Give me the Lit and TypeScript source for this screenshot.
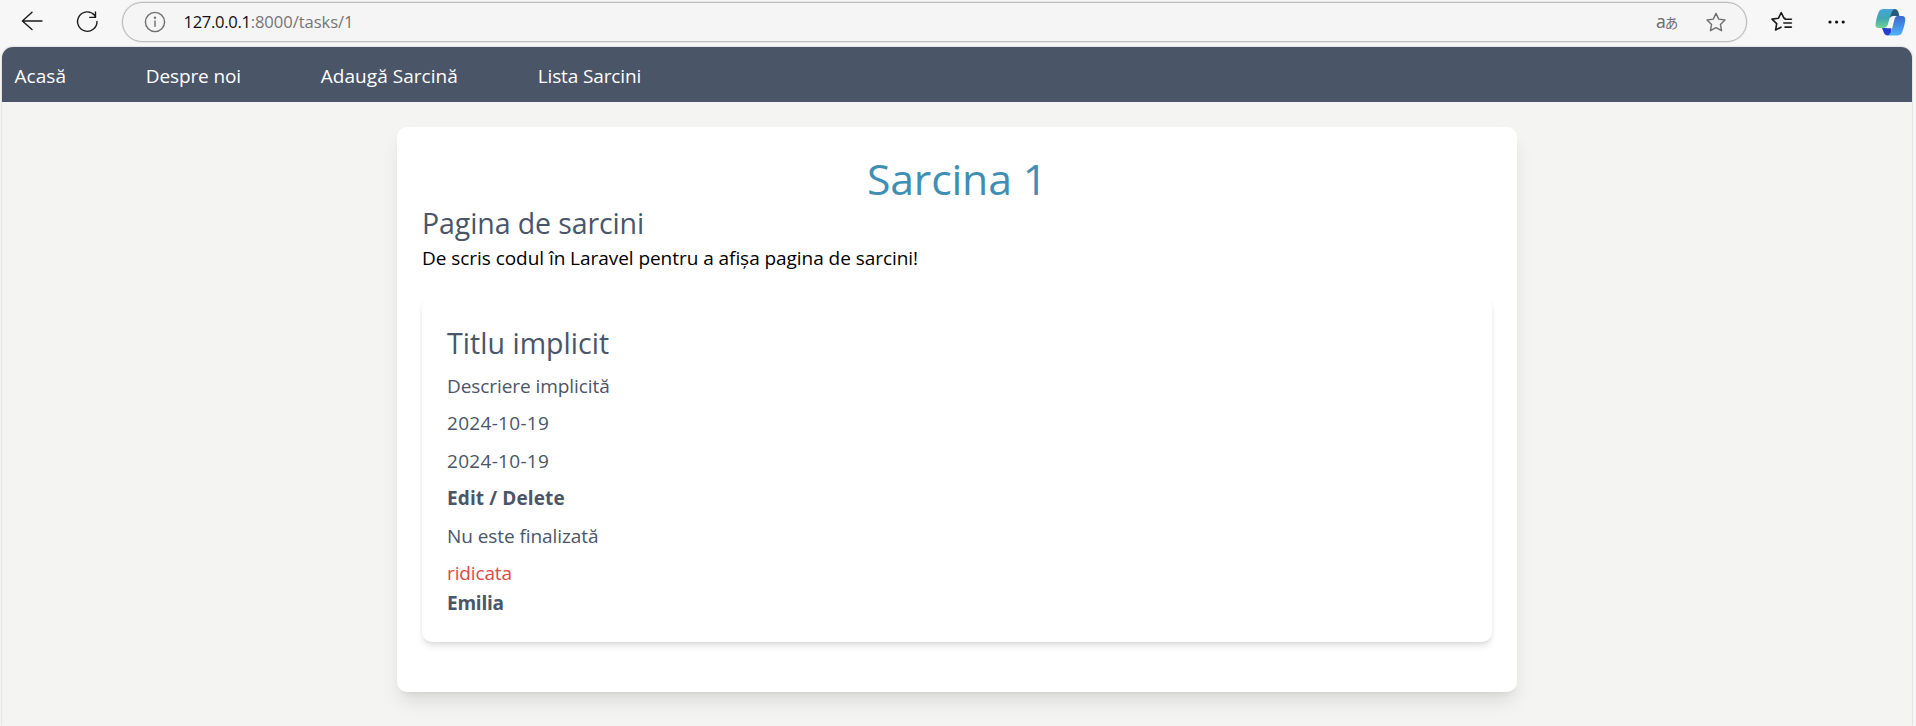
import { LitElement, html, css } from "lit";
import { customElement, property } from "lit/decorators.js";

const star =
  "M10 1.4 12.7 7.1 19 8 14.4 12.4 15.6 18.7 10 15.7 4.4 18.7 5.6 12.4 1 8 7.3 7.1Z";

@customElement("browser-bar")
class BrowserBar extends LitElement {
  static styles = css`
    :host { display: flex; align-items: flex-start; height: 47px; box-sizing: border-box; padding: 2px 9px 0 20px; background: #f7f7f7; }
    svg { display: block; fill: none; stroke: #1b1b1b; stroke-width: 1.4; stroke-linecap: round; stroke-linejoin: round; flex: none; }
    .back { margin: 8px 31px 0 0; }
    .reload { margin: 8px 23px 0 0; }
    .omnibox { flex: 1; display: flex; align-items: center; height: 40px; box-sizing: border-box; padding: 0 20px 0 20.5px; border: 1px solid #bcbcbc; border-radius: 20px; background: #f5f5f5; box-shadow: 0 0 0 0.5px #d8d8d8; }
    .omnibox svg { stroke: #6f6f6f; }
    .url { flex: 1; display: flex; margin-left: 18px; padding-bottom: 1px; font: 16.6px/24px "Open Sans", sans-serif; color: #767676; letter-spacing: -0.06px; white-space: nowrap; }
    .host { color: #111; letter-spacing: -0.32px; }
    .lang { display: flex; align-items: baseline; width: 22px; margin-right: 28px; padding-bottom: 1px; font: 17.5px/24px "Noto Sans", "Noto Sans CJK JP", sans-serif; color: #6f6f6f; }
    .kana { font: 13.5px/24px "Noto Sans CJK JP", sans-serif; margin-left: -1px; }
    .fav { margin: 9px 0 0 24px; }
    .more { margin: 9px 0 0 34px; }
    .more circle { fill: #111; stroke: none; }
    .copilot { margin: 7px 0 0 28px; }
    .copilot path { stroke: none; }
  `;
  render() {
    return html`
      <svg class="back" width="24" height="24" viewBox="0 0 24 24"><path d="M22 11H2.5M12 2.2 2.4 11 12 19.6" /></svg>
      <svg class="reload" width="24" height="24" viewBox="0 0 24 24"><path d="M22 11.5A9.7 9.7 0 1 1 19.6 5.2L20.4 7.3M20.5 2V7.4H14.8" /></svg>
      <div class="omnibox">
        <svg width="22" height="22" viewBox="0 0 22 22"><circle cx="11" cy="11" r="9.6" /><path d="M11 10V15.4" /><circle cx="11" cy="6.8" r=".5" /></svg>
        <div class="url"><span class="host">127.0.0.1</span><span>:8000/tasks/1</span></div>
        <div class="lang"><span>a</span><span class="kana">あ</span></div>
        <svg width="20" height="20" viewBox="0 0 20 20"><path d=${star} /></svg>
      </div>
      <svg class="fav" width="22" height="22" viewBox="0 0 22 22"><path stroke-width="1.6" d="M13.9 7.4 13 7.2 10.2 1.6 7.5 7.2 1 8.1 5.7 12.6 4.6 19 10 16.2M14 8.2H20.4M12.8 12H20.4M14 16.1H20.4" /></svg>
      <svg class="more" width="20" height="22" viewBox="0 0 20 22"><circle cx="3" cy="11" r="1.6" /><circle cx="9.6" cy="11" r="1.6" /><circle cx="16.2" cy="11" r="1.6" /></svg>
      <svg class="copilot" width="32" height="28" viewBox="0 0 32 28">
        <defs>
          <linearGradient id="l" x1="0" y1="0" x2="0" y2="1"><stop offset="0" stop-color="#45a6dc" /><stop offset=".5" stop-color="#41a7b4" /><stop offset="1" stop-color="#6fd592" /></linearGradient>
          <linearGradient id="r" x1="0" y1="0" x2="0" y2="1"><stop offset="0" stop-color="#3a68cf" /><stop offset="1" stop-color="#4fb3f8" /></linearGradient>
        </defs>
        <path fill="#265b7c" d="M15 0H20Q22.4 0 23.2 2.6L24.4 7H20Q16.5 7 15.6 10L15 11Z" />
        <path fill="#2440d0" d="M7 19H12L16 18 16.5 20Q16 26.4 13 26.4 9.8 26.4 8.8 23.4Z" />
        <path fill="url(#l)" d="M8.5 0H20Q17.2.4 16 5L13.2 14.5Q12 19 8 19H3.8Q0 19 .6 14.5C1.4 9.5 2.5 6 3.6 3.2Q5 0 8.5 0Z" />
        <path fill="#f7f7f7" d="M15 8.8Q16 7 18.5 7H22L17.5 19.3H11.5Q12.8 17.5 13.4 14.5Z" />
        <path fill="url(#r)" d="M22.5 7H27Q30.8 7 30.2 11.6C29.5 16.5 28.4 20.2 27.2 23.2Q25.8 26.4 22.3 26.4H13Q15.4 26 16.5 22L19.2 11.5Q20 7 22.5 7Z" />
      </svg>
    `;
  }
}

@customElement("site-nav")
class SiteNav extends LitElement {
  static styles = css`
    :host { display: flex; gap: 79.8px; height: 55px; box-sizing: border-box; padding: 14px 12.5px 0; background: #4a5568; border-radius: 11px 11px 0 0; }
    a { font: 19px/31px "Open Sans", sans-serif; color: #fff; white-space: nowrap; letter-spacing: .04px; }
    .tight { letter-spacing: -0.12px; }
  `;
  render() {
    return html`<a>Acasă</a><a class="tight">Despre noi</a><a>Adaugă Sarcină</a><a class="tight">Lista Sarcini</a>`;
  }
}

@customElement("task-card")
class TaskCard extends LitElement {
  @property({ attribute: false }) task: Record<string, string> = {};
  static styles = css`
    :host { display: block; margin: 25px 0; padding: 25px; border-radius: 10px; background: #fff; color: #4a5568; font: 19px/28px "Open Sans", sans-serif; box-shadow: 0 5px 7.5px -1.25px rgba(0,0,0,.1), 0 2.5px 5px -2.5px rgba(0,0,0,.1); }
    h2 { margin: 0 0 7.5px; padding-top: 2px; font-size: 28.5px; line-height: 38px; font-weight: 400; letter-spacing: .05px; }
    p { margin: 0 0 7.5px; padding-top: 2px; letter-spacing: -.07px; }
    .date { letter-spacing: .3px; }
    .actions { font-weight: 700; letter-spacing: .12px; }
    .priority { margin: 0; color: #e04a45; letter-spacing: -.14px; }
    .author { margin: 0; font-weight: 700; letter-spacing: -.24px; }
  `;
  render() {
    const t = this.task;
    return html`
      <h2>${t.title}</h2>
      <p>${t.description}</p>
      <p class="date">${t.created}</p>
      <p class="date">${t.updated}</p>
      <p class="actions">Edit / Delete</p>
      <p>${t.status}</p>
      <p class="priority">${t.priority}</p>
      <p class="author">${t.author}</p>
    `;
  }
}

@customElement("app-root")
class AppRoot extends LitElement {
  static styles = css`
    :host { display: flex; flex-direction: column; height: 726px; overflow: hidden; background: #f7f7f7; }
    .page { flex: 1; margin: 0 4px 0 2px; background: #f4f4f3; border-radius: 11px 11px 0 0; box-shadow: 0 0 2px rgba(0,0,0,.25); clip-path: inset(-3px -4px 0 -2px); }
    .card { width: 1120px; box-sizing: border-box; margin: 25px auto 0; padding: 25px; background: #fff; border-radius: 10px; font: 19px/28px "Open Sans", sans-serif; color: #000; box-shadow: 0 12.5px 18.75px -3.75px rgba(0,0,0,.1), 0 5px 7.5px -5px rgba(0,0,0,.1); }
    h1 { margin: 0; padding-top: 4px; font-size: 42.75px; line-height: 46px; font-weight: 400; letter-spacing: -.15px; text-align: center; color: #408fb2; }
    h2 { margin: 0; padding-top: 2px; font-size: 28.5px; line-height: 38px; font-weight: 400; letter-spacing: -.1px; color: #4a5568; }
    p { margin: 0; padding-top: 2px; letter-spacing: -.05px; }
  `;
  task = {
    title: "Titlu implicit",
    description: "Descriere implicită",
    created: "2024-10-19",
    updated: "2024-10-19",
    status: "Nu este finalizată",
    priority: "ridicata",
    author: "Emilia",
  };
  render() {
    return html`
      <browser-bar></browser-bar>
      <div class="page">
        <site-nav></site-nav>
        <main class="card">
          <h1>Sarcina 1</h1>
          <h2>Pagina de sarcini</h2>
          <p>De scris codul în Laravel pentru a afișa pagina de sarcini!</p>
          <task-card .task=${this.task}></task-card>
        </main>
      </div>
    `;
  }
}
